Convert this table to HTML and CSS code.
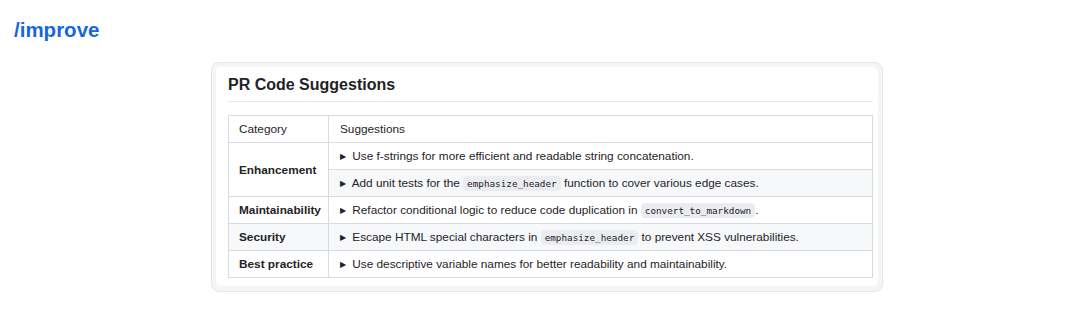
FILE: index.html
```html
<!DOCTYPE html>
<html>
<head>
<meta charset="utf-8">
<link rel="stylesheet" href="styles.css">
</head>
<body>
<h1 class="cmd">/improve</h1>
<div class="card">
  <div class="card-inner">
    <h2 class="title">PR Code Suggestions</h2>
    <table class="tbl">
      <thead>
        <tr><td class="cat-h">Category</td><td class="sug">Suggestions</td></tr>
      </thead>
      <tbody>
        <tr><td class="cat" rowspan="2">Enhancement</td><td class="sug"><span class="tri">&#9654;</span> Use f-strings for more efficient and readable string concatenation.</td></tr>
        <tr class="alt"><td class="sug"><span class="tri">&#9654;</span> Add unit tests for the <code>emphasize_header</code> function to cover various edge cases.</td></tr>
        <tr><td class="cat">Maintainability</td><td class="sug"><span class="tri">&#9654;</span> Refactor conditional logic to reduce code duplication in <code>convert_to_markdown</code>.</td></tr>
        <tr class="alt"><td class="cat">Security</td><td class="sug"><span class="tri">&#9654;</span> Escape HTML special characters in <code>emphasize_header</code> to prevent XSS vulnerabilities.</td></tr>
        <tr><td class="cat">Best practice</td><td class="sug"><span class="tri">&#9654;</span> Use descriptive variable names for better readability and maintainability.</td></tr>
      </tbody>
    </table>
  </div>
</div>
</body>
</html>
```
FILE: styles.css
```css
html, body {
  margin: 0;
  padding: 0;
  background: #ffffff;
  font-family: "Liberation Sans", Arial, sans-serif;
  color: #1f2328;
}
.cmd {
  margin: 0;
  padding: 18px 0 0 14px;
  height: 26px;
  font-size: 20.5px;
  line-height: 24px;
  font-weight: bold;
  color: #1667d9;
}
.card {
  margin: 18px 0 0 211px;
  width: 662px;
  border: 1px solid #e4e6ea;
  border-radius: 8px;
  padding: 4px 4px 5px 4px;
  background: #f4f5f7;
}
.card-inner {
  background: #ffffff;
  border-radius: 5px;
  padding: 7px 5px 8px 12px;
}
.title {
  margin: 0;
  font-size: 16px;
  line-height: 22px;
  font-weight: bold;
  padding-bottom: 5px;
  border-bottom: 1px solid #e3e6ea;
  color: #1f2328;
}
.tbl {
  margin-top: 13px;
  width: 645px;
  table-layout: fixed;
  border-collapse: collapse;
  font-size: 11.8px;
  color: #1f2328;
}
.tbl td {
  border: 1px solid #d6dbe0;
  height: 26px;
  padding: 0 10px;
  vertical-align: middle;
  white-space: nowrap;
}
.tbl td.cat-h,
.tbl td.cat {
  width: 79px;
}
.tbl td.sug {
  padding: 0 10px 0 11px;
}
.tbl td.cat {
  font-weight: bold;
  background: #ffffff;
}
.tbl tr.alt td {
  background: #f6f8fa;
}
.tri {
  font-size: 8px;
  margin-right: 3px;
  position: relative;
  top: -1px;
}
code {
  font-family: "DejaVu Sans Mono", "Liberation Mono", monospace;
  font-size: 9.3px;
  background: #eaecef;
  border-radius: 4px;
  padding: 2px 4px;
}
```
